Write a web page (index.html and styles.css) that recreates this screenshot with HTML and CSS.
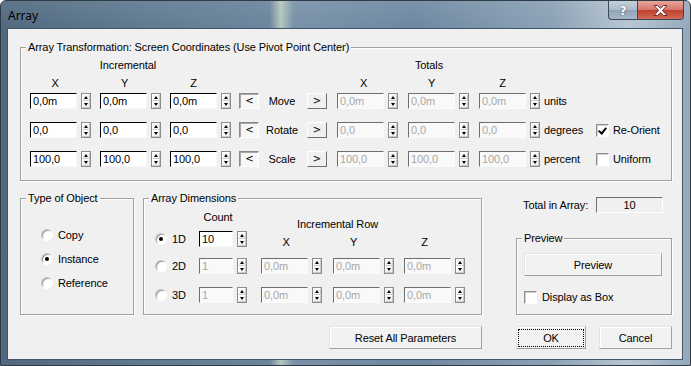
FILE: index.html
```html
<!DOCTYPE html>
<html lang="en">
<head>
    <meta charset="UTF-8">
    <title>Array</title>
    <link rel="stylesheet" href="styles.css">
</head>
<body>
<div class="window">
    <div class="titlebar">
        <span class="title">Array</span>
        <div class="caption-buttons">
            <div class="cap-btn help">?</div>
            <div class="cap-btn close">
                <svg width="15" height="11" viewBox="0 0 15 11"><path d="M1 0.5h3.6l2.9 2.8 2.9-2.8h3.6l-4.6 5 4.6 5h-3.6l-2.9-2.8-2.9 2.8h-3.6l4.6-5z" fill="#fff" stroke="#6b2a22" stroke-width="1" stroke-linejoin="round"/></svg>
            </div>
        </div>
    </div>

    <div class="client">
        <!-- Array transformation -->
        <div class="group transform">
            <span class="caption">Array Transformation: Screen Coordinates (Use Pivot Point Center)</span>

            <div class="trow heads">
                <div class="hdr incr">Incremental</div>
                <div class="hdr totals">Totals</div>
            </div>

            <div class="trow axes">
                <div class="axis c1">X</div>
                <div class="axis c2">Y</div>
                <div class="axis c3">Z</div>
                <div class="axis c7">X</div>
                <div class="axis c8">Y</div>
                <div class="axis c9">Z</div>
            </div>

            <div class="trow ctl">
                <div class="spin"><div class="edit">0,0m</div><div class="arrows"><span class="up"></span><span class="dn"></span></div></div>
                <div class="spin"><div class="edit">0,0m</div><div class="arrows"><span class="up"></span><span class="dn"></span></div></div>
                <div class="spin"><div class="edit">0,0m</div><div class="arrows"><span class="up"></span><span class="dn"></span></div></div>
                <div class="sbtn pressed">&lt;</div>
                <div class="op">Move</div>
                <div class="sbtn">&gt;</div>
                <div class="spin"><div class="edit off">0,0m</div><div class="arrows"><span class="up"></span><span class="dn"></span></div></div>
                <div class="spin"><div class="edit off">0,0m</div><div class="arrows"><span class="up"></span><span class="dn"></span></div></div>
                <div class="spin"><div class="edit off">0,0m</div><div class="arrows"><span class="up"></span><span class="dn"></span></div></div>
                <div class="unit">units</div>
            </div>

            <div class="trow ctl">
                <div class="spin"><div class="edit">0,0</div><div class="arrows"><span class="up"></span><span class="dn"></span></div></div>
                <div class="spin"><div class="edit">0,0</div><div class="arrows"><span class="up"></span><span class="dn"></span></div></div>
                <div class="spin"><div class="edit">0,0</div><div class="arrows"><span class="up"></span><span class="dn"></span></div></div>
                <div class="sbtn pressed">&lt;</div>
                <div class="op">Rotate</div>
                <div class="sbtn">&gt;</div>
                <div class="spin"><div class="edit off">0,0</div><div class="arrows"><span class="up"></span><span class="dn"></span></div></div>
                <div class="spin"><div class="edit off">0,0</div><div class="arrows"><span class="up"></span><span class="dn"></span></div></div>
                <div class="spin"><div class="edit off">0,0</div><div class="arrows"><span class="up"></span><span class="dn"></span></div></div>
                <div class="unit">degrees</div>
                <label class="check"><span class="box on"></span>Re-Orient</label>
            </div>

            <div class="trow ctl">
                <div class="spin"><div class="edit">100,0</div><div class="arrows"><span class="up"></span><span class="dn"></span></div></div>
                <div class="spin"><div class="edit">100,0</div><div class="arrows"><span class="up"></span><span class="dn"></span></div></div>
                <div class="spin"><div class="edit">100,0</div><div class="arrows"><span class="up"></span><span class="dn"></span></div></div>
                <div class="sbtn pressed">&lt;</div>
                <div class="op">Scale</div>
                <div class="sbtn">&gt;</div>
                <div class="spin"><div class="edit off">100,0</div><div class="arrows"><span class="up"></span><span class="dn"></span></div></div>
                <div class="spin"><div class="edit off">100,0</div><div class="arrows"><span class="up"></span><span class="dn"></span></div></div>
                <div class="spin"><div class="edit off">100,0</div><div class="arrows"><span class="up"></span><span class="dn"></span></div></div>
                <div class="unit">percent</div>
                <label class="check"><span class="box"></span>Uniform</label>
            </div>
        </div>

        <div class="lower">
            <!-- Type of object -->
            <div class="group type">
                <span class="caption">Type of Object</span>
                <div class="radios">
                    <div class="radio"><span class="dot"></span>Copy</div>
                    <div class="radio"><span class="dot on"></span>Instance</div>
                    <div class="radio"><span class="dot"></span>Reference</div>
                </div>
            </div>

            <!-- Array dimensions -->
            <div class="group dims">
                <span class="caption">Array Dimensions</span>
                <div class="dgrid">
                    <div class="count-hdr">Count</div>
                    <div class="row-hdr">Incremental Row</div>

                    <div class="radio"><span class="dot on"></span>1D</div>
                    <div class="spin short"><div class="edit">10</div><div class="arrows"><span class="up"></span><span class="dn"></span></div></div>
                    <div class="axis dx">X</div>
                    <div class="axis dy">Y</div>
                    <div class="axis dz">Z</div>

                    <div class="radio"><span class="dot"></span>2D</div>
                    <div class="spin short"><div class="edit off">1</div><div class="arrows"><span class="up"></span><span class="dn"></span></div></div>
                    <div class="spin"><div class="edit off">0,0m</div><div class="arrows"><span class="up"></span><span class="dn"></span></div></div>
                    <div class="spin"><div class="edit off">0,0m</div><div class="arrows"><span class="up"></span><span class="dn"></span></div></div>
                    <div class="spin"><div class="edit off">0,0m</div><div class="arrows"><span class="up"></span><span class="dn"></span></div></div>

                    <div class="radio"><span class="dot"></span>3D</div>
                    <div class="spin short"><div class="edit off">1</div><div class="arrows"><span class="up"></span><span class="dn"></span></div></div>
                    <div class="spin"><div class="edit off">0,0m</div><div class="arrows"><span class="up"></span><span class="dn"></span></div></div>
                    <div class="spin"><div class="edit off">0,0m</div><div class="arrows"><span class="up"></span><span class="dn"></span></div></div>
                    <div class="spin"><div class="edit off">0,0m</div><div class="arrows"><span class="up"></span><span class="dn"></span></div></div>
                </div>
            </div>

            <div class="side">
                <div class="total">
                    <span>Total in Array:</span>
                    <div class="field">10</div>
                </div>
                <div class="group preview">
                    <span class="caption">Preview</span>
                    <div class="button wide">Preview</div>
                    <label class="check"><span class="box"></span>Display as Box</label>
                </div>
            </div>
        </div>

        <div class="actions">
            <div class="button reset">Reset All Parameters</div>
            <div class="button ok"><span class="focus">OK</span></div>
            <div class="button cancel">Cancel</div>
        </div>
    </div>
</div>
</body>
</html>
```

FILE: styles.css
```css
* {
    box-sizing: border-box;
}

body {
    margin: 0;
    width: 691px;
    height: 366px;
    overflow: hidden;
    font-family: "Liberation Sans", Arial, sans-serif;
    font-size: 11px;
    letter-spacing: -0.1px;
    color: #000;
    background: #fff;
}

/* Window frame (Windows 7 basic look) */
.window {
    width: 691px;
    height: 366px;
    display: flex;
    flex-direction: column;
    border: 1px solid #2f3b47;
    border-radius: 6px 6px 0 0;
    background: linear-gradient(to right, #51697f 0%, #5f7990 20%, #6b859d 39%, #b5c6bd 40.6%, #7891a8 42.5%, #6e88a1 60%, #8ba1b5 80%, #b8c6d2 91%, #93a9bc 100%);
}

.titlebar {
    height: 28px;
    display: flex;
    align-items: flex-start;
    justify-content: space-between;
    background: linear-gradient(to bottom, rgba(255, 255, 255, 0.08), rgba(255, 255, 255, 0));
}

.title {
    font-family: "Noto Sans", sans-serif;
    font-size: 12px;
    letter-spacing: 0;
    padding: 6px 0 0 7px;
}

.caption-buttons {
    display: flex;
    margin-right: 6px;
}

.cap-btn {
    height: 19px;
    border: 1px solid #3b4857;
    border-top: none;
    display: flex;
    align-items: center;
    justify-content: center;
}

.help {
    width: 29px;
    border-right: none;
    border-radius: 0 0 0 4px;
    background: linear-gradient(to bottom, #c4d0db 0%, #a9bac9 50%, #8ea3b7 51%, #a6b7c6 100%);
    color: #fff;
    font-family: "DejaVu Sans", sans-serif;
    font-weight: bold;
    font-size: 13px;
    text-shadow: 0 0 1px #3b4857, 0 0 1px #3b4857;
}

.close {
    width: 47px;
    border-radius: 0 0 4px 0;
    background: linear-gradient(to bottom, #e8a59d 0%, #d7776c 48%, #c2402f 52%, #d16a56 100%);
}

/* Client area */
.client {
    margin: 0 8px 0 7px;
    height: 330px;
    background: #f0f0f0;
    box-shadow: 0 0 0 1px #43566a;
    padding: 18px 10px 0 12px;
}

.group {
    position: relative;
    border: 1px solid #a0a0a0;
    box-shadow: inset 1px 1px 0 #fff, 1px 1px 0 #fff;
}

.caption {
    position: absolute;
    top: -8px;
    left: 5px;
    padding: 0 2px;
    line-height: 14px;
    background: #f0f0f0;
    white-space: nowrap;
}

/* Transformation rows */
.transform {
    height: 134px;
    padding: 10px 0 0 9px;
}

.trow {
    display: grid;
    grid-template-columns: 70px 70px 69px 20px 48px 30px 71px 71px 64px 53px auto;
    align-items: start;
}

.heads {
    height: 18px;
}

.axes {
    height: 17px;
}

.ctl {
    height: 29px;
}

.hdr {
    line-height: 14px;
    text-align: center;
}

.incr {
    grid-column: 1 / 4;
    padding-right: 13px;
}

.totals {
    grid-column: 7 / 10;
    padding-right: 22px;
}

.axis {
    line-height: 14px;
    width: 47px;
    text-align: center;
}

.c1 { grid-column: 1; padding-left: 3px; }
.c2 { grid-column: 2; padding-left: 2px; }
.c3 { grid-column: 3; }
.c7 { grid-column: 7; padding-left: 6px; }
.c8 { grid-column: 8; }
.c9 { grid-column: 9; }

.spin {
    display: flex;
    height: 16px;
}

.edit {
    width: 47px;
    height: 16px;
    margin-right: 4px;
    padding-left: 2px;
    line-height: 14px;
    background: #fff;
    border: 1px solid;
    border-color: #000 #f8f8f8 #f8f8f8 #000;
    white-space: nowrap;
    overflow: hidden;
}

.edit.off {
    color: #a8a8a8;
    background: #f9f9f9;
    border-color: #6e6e6e #fcfcfc #fcfcfc #6e6e6e;
}

.short .edit {
    width: 34px;
}

.arrows {
    width: 10px;
    height: 16px;
    display: flex;
    flex-direction: column;
    border: 1px solid #8c8c8c;
    background: #f4f4f4;
}

.arrows span {
    flex: 1;
    display: flex;
    align-items: center;
    justify-content: center;
    border: 1px solid;
    border-color: #fff #c8c8c8 #c8c8c8 #fff;
}

.arrows .up::before,
.arrows .dn::before {
    content: "";
    border-left: 2.5px solid transparent;
    border-right: 2.5px solid transparent;
}

.arrows .up::before {
    border-bottom: 3px solid #000;
}

.arrows .dn::before {
    border-top: 3px solid #000;
}

.sbtn {
    width: 20px;
    height: 16px;
    line-height: 14px;
    text-align: center;
    font-family: "DejaVu Sans", sans-serif;
    font-size: 10px;
    border: 1px solid;
    border-color: #fff #6d6d6d #6d6d6d #fff;
    background: #f0f0f0;
}

.sbtn.pressed {
    border-color: #8a8a8a #fff #fff #8a8a8a;
    box-shadow: inset 1px 1px 0 #a8a8a8;
    background: #f7f7f7;
    padding-left: 1px;
}

.op,
.unit {
    line-height: 16px;
    white-space: nowrap;
}

.op {
    text-align: center;
    padding-right: 2px;
}

.unit {
    padding-left: 1px;
    line-height: 17px;
}

.check {
    display: flex;
    align-items: center;
    height: 16px;
    white-space: nowrap;
}

.box {
    width: 13px;
    height: 13px;
    margin-right: 4px;
    background: #fff;
    border: 1px solid;
    border-color: #8e8e8e #fff #fff #8e8e8e;
    box-shadow: inset 1px 1px 0 #d0d0d0;
    position: relative;
}

.box.on::after {
    content: "";
    position: absolute;
    left: 2px;
    top: 1px;
    width: 3px;
    height: 6px;
    border: solid #000;
    border-width: 0 2px 2px 0;
    transform: translate(1px, 0) rotate(40deg);
}

.preview .box {
    margin-right: 5px;
}

/* Lower area */
.lower {
    display: flex;
    margin-top: 17px;
}

.type {
    width: 114px;
    height: 117px;
    margin-right: 9px;
    padding: 28px 0 0 20px;
}

.radios {
    display: flex;
    flex-direction: column;
    gap: 8px;
}

.radio {
    display: flex;
    align-items: center;
    height: 16px;
    white-space: nowrap;
}

.dot {
    width: 12px;
    height: 12px;
    margin-right: 5px;
    border-radius: 50%;
    background: #fff;
    border: 1px solid;
    border-color: #c4c4c4 #fff #fff #c4c4c4;
    box-shadow: inset 1px 1px 0 #9a9a9a;
    position: relative;
}

.dot.on::after {
    content: "";
    position: absolute;
    left: 3px;
    top: 3px;
    width: 4px;
    height: 4px;
    border-radius: 50%;
    background: #000;
}

.dims {
    width: 339px;
    height: 117px;
    margin-right: 34px;
    padding: 11px 0 0 11px;
}

.dgrid {
    display: grid;
    grid-template-columns: 44px 62px 72px 71px auto;
    grid-template-rows: 21px 27px 29px 16px;
    align-items: start;
}

.count-hdr {
    grid-column: 2;
    width: 34px;
    text-align: center;
    line-height: 14px;
    padding-left: 4px;
}

.row-hdr {
    grid-column: 3 / 6;
    padding-left: 36px;
    margin-top: 7px;
    line-height: 14px;
}

.dgrid .axis {
    margin-top: 4px;
}

.dx { padding-left: 3px; }
.dy { padding-right: 6px; }
.dz { padding-right: 6px; }

.side {
    width: 156px;
}

.total {
    display: flex;
    align-items: center;
    justify-content: space-between;
    height: 16px;
    margin-top: -1px;
    padding: 0 9px 0 7px;
}

.field {
    width: 67px;
    height: 16px;
    line-height: 14px;
    text-align: center;
    border: 1px solid;
    border-color: #6e6e6e #fff #fff #6e6e6e;
}

.preview {
    margin-top: 25px;
    height: 77px;
    padding: 14px 0 0 7px;
}

.button {
    display: flex;
    align-items: center;
    justify-content: center;
    height: 23px;
    background: #f2f2f2;
    border: 1px solid;
    border-color: #e4e4e4 #a0a0a0 #a0a0a0 #e4e4e4;
    box-shadow: inset 1px 1px 0 #fff;
}

.wide {
    width: 138px;
    margin-bottom: 13px;
}

/* Bottom buttons */
.actions {
    display: flex;
    justify-content: flex-end;
    margin-top: 11px;
}

.reset {
    width: 153px;
    margin-right: 34px;
}

.ok {
    width: 70px;
    margin-right: 13px;
}

.ok .focus {
    width: 66px;
    height: 18px;
    line-height: 16px;
    text-align: center;
    border: 1px dotted #000;
}

.cancel {
    width: 73px;
}
```
